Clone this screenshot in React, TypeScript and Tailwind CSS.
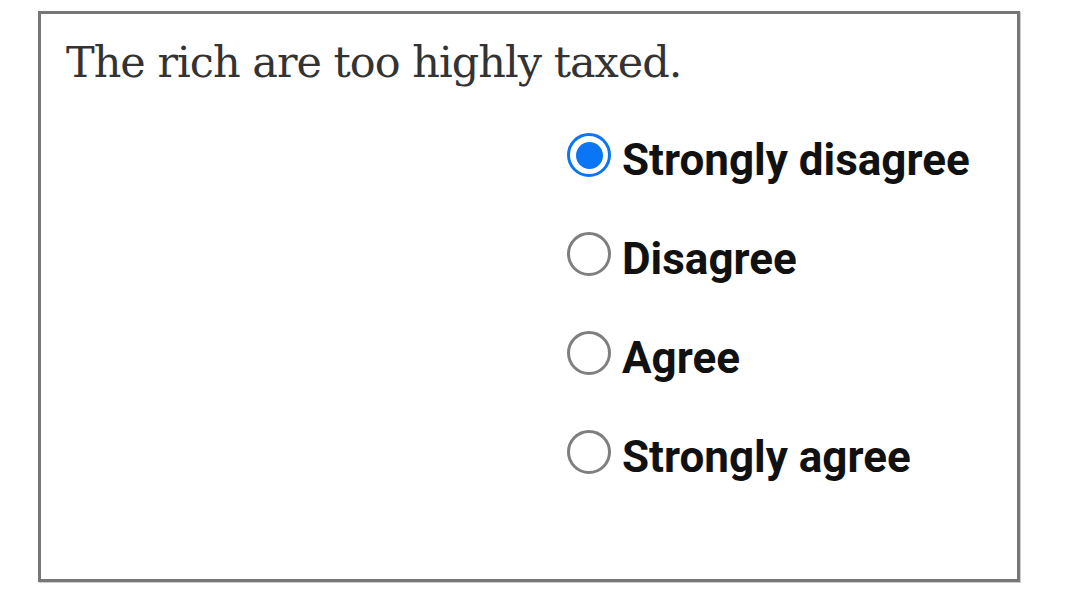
export default function App() {
  const options = ['Strongly disagree', 'Disagree', 'Agree', 'Strongly agree']
  const selected = 0

  return (
    <div className="w-[1080px] h-[592px] bg-white pt-[11px] pl-[38px]">
      <div className="w-[982px] h-[571px] border-[3px] border-[#777777] shadow-[1px_1px_0_#cccccc] pt-[20px] pl-[25px]">
        <p
          className="text-[#333333] text-[43px] leading-[56px] tracking-[-1px]"
          style={{ fontFamily: '"DejaVu Serif", serif' }}
        >
          The rich are too highly taxed.
        </p>

        <div className="flex flex-col ml-[501px] mt-[43px] gap-[55px]">
          {options.map((label, i) => (
            <label key={label} className="flex items-center gap-[11px] h-[44px]">
              {i === selected ? (
                <span className="w-[44px] h-[44px] rounded-full border-[3px] border-[#0a75f5] flex items-center justify-center">
                  <span className="w-[27px] h-[27px] rounded-full bg-[#0a75f5]" />
                </span>
              ) : (
                <span className="w-[44px] h-[44px] rounded-full border-[3px] border-[#7f7f7f]" />
              )}
              <span
                className="text-[44px] font-bold text-[#111111] leading-none pt-[10px]"
                style={{ fontFamily: 'Roboto, sans-serif' }}
              >
                {label}
              </span>
            </label>
          ))}
        </div>
      </div>
    </div>
  )
}
